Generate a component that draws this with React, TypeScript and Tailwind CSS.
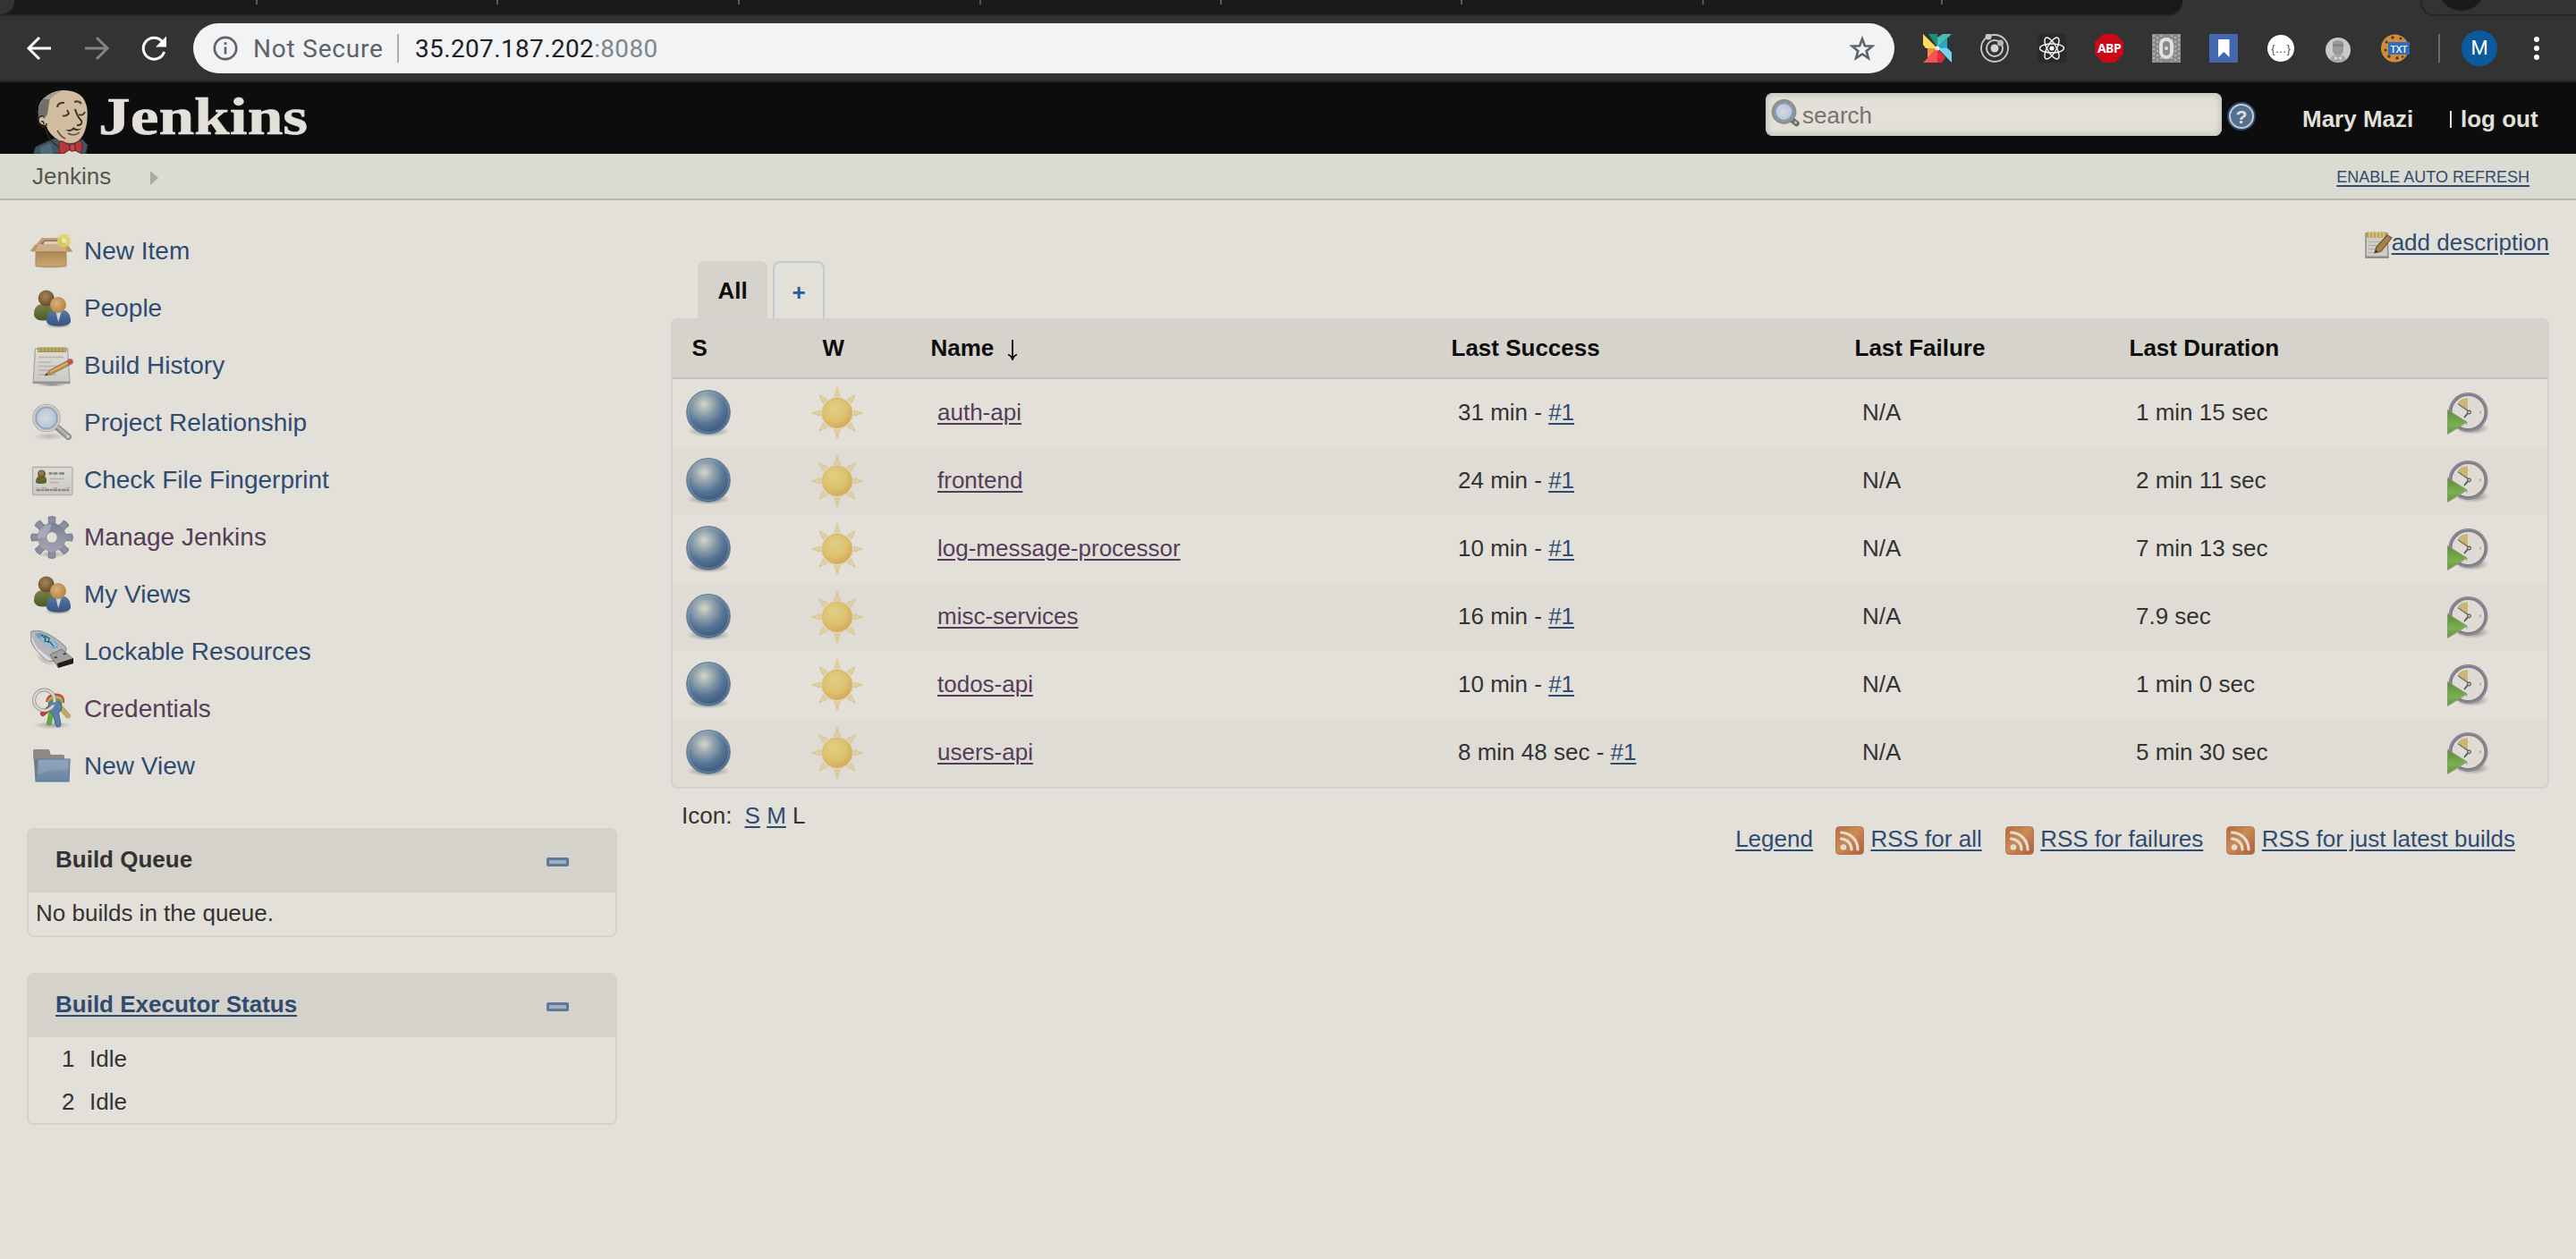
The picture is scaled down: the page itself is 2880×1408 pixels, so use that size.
import React from "react";

const LINK = "underline decoration-2 underline-offset-[3px]";

function Defs() {
  return (
    <svg className="absolute h-0 w-0" aria-hidden="true">
      <defs>
        <radialGradient id="ball" cx="0.4" cy="0.32" r="0.68">
          <stop offset="0" stopColor="#d3d5c4" />
          <stop offset="0.3" stopColor="#98a8b0" />
          <stop offset="0.65" stopColor="#587796" />
          <stop offset="1" stopColor="#39587d" />
        </radialGradient>
        <radialGradient id="sun" cx="0.4" cy="0.35" r="0.7">
          <stop offset="0" stopColor="#e0cf85" />
          <stop offset="0.6" stopColor="#dcc26d" />
          <stop offset="1" stopColor="#d3a45a" />
        </radialGradient>
        <radialGradient id="brown" cx="0.45" cy="0.4" r="0.6">
          <stop offset="0" stopColor="#a98759" />
          <stop offset="1" stopColor="#664a2a" />
        </radialGradient>
        <radialGradient id="orange" cx="0.4" cy="0.4" r="0.6">
          <stop offset="0" stopColor="#d9b27c" />
          <stop offset="1" stopColor="#b98546" />
        </radialGradient>
        <radialGradient id="shadow">
          <stop offset="0" stopColor="#000" stopOpacity="0.45" />
          <stop offset="1" stopColor="#000" stopOpacity="0" />
        </radialGradient>
        <linearGradient id="green" x1="0" y1="0" x2="0" y2="1">
          <stop offset="0" stopColor="#7c8446" />
          <stop offset="1" stopColor="#4b5a22" />
        </linearGradient>
        <linearGradient id="blue" x1="0" y1="0" x2="0" y2="1">
          <stop offset="0" stopColor="#5a7da6" />
          <stop offset="1" stopColor="#34527f" />
        </linearGradient>
        <linearGradient id="box" x1="0" y1="0" x2="0" y2="1">
          <stop offset="0" stopColor="#a8824f" />
          <stop offset="1" stopColor="#cba873" />
        </linearGradient>
        <linearGradient id="gear" gradientUnits="userSpaceOnUse" x1="28" y1="0" x2="20" y2="48">
          <stop offset="0" stopColor="#6a7388" />
          <stop offset="0.5" stopColor="#9496a4" />
          <stop offset="1" stopColor="#aea8b4" />
        </linearGradient>
        <linearGradient id="folder" x1="0" y1="0" x2="0" y2="1">
          <stop offset="0" stopColor="#8aa0b5" />
          <stop offset="1" stopColor="#6784a3" />
        </linearGradient>
        <linearGradient id="paper" x1="0" y1="0" x2="0" y2="1">
          <stop offset="0" stopColor="#dedcd6" />
          <stop offset="1" stopColor="#cbc9c3" />
        </linearGradient>
        <radialGradient id="lens" cx="0.45" cy="0.5" r="0.55">
          <stop offset="0" stopColor="#d3dbe0" />
          <stop offset="1" stopColor="#aebfcf" />
        </radialGradient>
        <linearGradient id="rss" x1="0" y1="0" x2="1" y2="1">
          <stop offset="0" stopColor="#b56a41" />
          <stop offset="0.45" stopColor="#ca8c55" />
          <stop offset="1" stopColor="#ae5c3c" />
        </linearGradient>
        <linearGradient id="play" x1="0" y1="0" x2="0" y2="1">
          <stop offset="0" stopColor="#5a8a38" />
          <stop offset="0.6" stopColor="#7db04e" />
          <stop offset="1" stopColor="#5f9a3a" />
        </linearGradient>
      </defs>
    </svg>
  );
}

type IconProps = { children: React.ReactNode; className?: string };
function Icon48({ children, className = "" }: IconProps) {
  return (
    <svg viewBox="0 0 48 48" className={"h-12 w-12 shrink-0 " + className} fill="none">
      {children}
    </svg>
  );
}

const NewItemIcon = () => (
  <Icon48>
    <ellipse cx="23" cy="40" rx="20" ry="3.500" fill="url(#shadow)" />
    <path d="M13 9h22l5 8H8z" fill="#94744a" />
    <path d="M13 9h22l1.500 2.500H12z" fill="#c0a07a" />
    <path d="M16 13h15l2 4H14z" fill="#d8d1c0" />
    <path d="M13 9 6 17h4l6-6z" fill="#bd9c72" />
    <path d="M6 22h34v17.500q0 1.500-1.500 1.500h-31Q6 41 6 39.500z" fill="url(#box)" stroke="#ad8654" strokeWidth="1" />
    <path d="M6 16h35l6 8q-4 1-7 0H6q-3 1-6-.5z" fill="#cdaf87" />
    <path d="m6 16-6 7.500q3 1.500 5.500 0L8 18zM41 16l6 8q-3 1.500-6 0l-2-6z" fill="#b8966a" />
    <circle cx="37.500" cy="12" r="7.500" fill="#ddd463" opacity="0.85" />
    <circle cx="37.500" cy="12" r="2.600" fill="#eee9b8" />
  </Icon48>
);

const PeopleIcon = () => (
  <Icon48>
    <ellipse cx="31" cy="43" rx="15" ry="3" fill="url(#shadow)" />
    <path d="M4 30q0-11 12-11.500T26 30q0 7-10 7.500T4 32z" fill="url(#green)" />
    <circle cx="17.700" cy="12.500" r="9" fill="url(#brown)" />
    <path d="M18 38q0-13 13.500-13T45 38q0 5.500-13.500 5.500T18 38z" fill="url(#blue)" />
    <path d="m28.500 28 2.700 11 3.300-11z" fill="#cfd3d3" />
    <circle cx="31" cy="20" r="9" fill="url(#orange)" />
  </Icon48>
);

const HistoryIcon = () => (
  <Icon48>
    <ellipse cx="24" cy="45" rx="17" ry="2.500" fill="url(#shadow)" />
    <path d="M5.500 5h36L44 43.500H3z" fill="url(#paper)" stroke="#a9a7a0" strokeWidth="1.300" />
    <path d="M3 41.500h41v2.500H3z" fill="#96948e" />
    <path d="M8 3.500h32V9H8z" fill="#a29350" />
    <path d="M10 3v5M14 3v5M18 3v5M22 3v5M26 3v5M30 3v5M34 3v5M38 3v5" stroke="#c9bd80" strokeWidth="1.200" />
    <path d="M9 14.500h28M9 20h14M9 24.500h25M9 29h18M9 34h20" stroke="#b3b1ab" strokeWidth="1.300" />
    <path d="m16 35 5-5.500L42 18l3 4.500-21.500 11z" fill="#b98e4c" stroke="#8a6a3a" strokeWidth="0.800" />
    <path d="m22 31 20.500-10.500" stroke="#dcb679" strokeWidth="1.500" />
    <path d="m16 35 2-2.600 1.500 1.500z" fill="#333" />
    <circle cx="44.500" cy="19.500" r="3.200" fill="#b95355" />
  </Icon48>
);

const MagnifierIcon = () => (
  <Icon48>
    <ellipse cx="21" cy="39" rx="19" ry="4.500" fill="url(#shadow)" opacity="0.4" />
    <path d="m30 29 12.500 10.500" stroke="#8d8d88" strokeWidth="7" strokeLinecap="round" />
    <path d="m31 29 11 10" stroke="#b2b1ad" strokeWidth="3.600" strokeLinecap="round" />
    <circle cx="42" cy="39.300" r="1.800" fill="#d5d3cc" />
    <circle cx="18" cy="18.500" r="14.300" fill="url(#lens)" stroke="#adaca7" strokeWidth="3" />
    <circle cx="18" cy="18.500" r="14" stroke="#d6d4ce" strokeWidth="1.400" />
    <circle cx="18" cy="18.500" r="11.700" stroke="#8aa0bc" strokeWidth="1.600" />
  </Icon48>
);

const CardIcon = () => (
  <Icon48>
    <rect x="2.500" y="9.500" width="44.500" height="31" rx="1.500" fill="url(#paper)" stroke="#b1afa9" strokeWidth="1.300" />
    <path d="M6 26q0-7 6.500-7T18 26q0 2-6 2t-6-2z" fill="#59682f" />
    <circle cx="12.500" cy="17" r="4.500" fill="url(#brown)" />
    <path d="M20.500 16.500h4M25.500 16.500h5M32 16.500h6" stroke="#85847f" strokeWidth="2.400" />
    <path d="M22 22.500h16M22 26.500h10" stroke="#b3b1ab" strokeWidth="1.300" />
    <path d="M6.500 35h37" stroke="#8a8983" strokeWidth="2.500" strokeDasharray="5 .7 3 .7" />
    <path d="M6.500 32.500h2M13 32.500h5M26 32.500h4M41 32.500h3" stroke="#a3a19b" strokeWidth="1.200" />
  </Icon48>
);

const GearIcon = () => (
  <Icon48>
    <ellipse cx="24" cy="43" rx="16" ry="3.500" fill="url(#shadow)" opacity="0.6" />
    <g fill="#8b8fa0" stroke="#777b8c" strokeWidth="1">
      {[0, 45, 90, 135, 180, 225, 270, 315].map((a) => (
        <path key={a} d="M19 13 20.500 7 20 1.500Q24-.5 28 1.500L27.500 7 29 13z" transform={`rotate(${a} 24 24)`} />
      ))}
    </g>
    <circle cx="24" cy="24" r="16" fill="url(#gear)" />
    <circle cx="24" cy="24" r="6.300" fill="#e2e0d9" stroke="#85889a" strokeWidth="1" />
    <path d="M9 19q5-10 15-10l-3 8q-4 2-4 7l-9 1z" fill="#b1b7c4" opacity="0.7" />
  </Icon48>
);

const UsbIcon = () => (
  <Icon48>
    <path d="M3 22q5 15 25 19l6-3z" fill="url(#shadow)" opacity="0.5" />
    <path d="M0 2Q4-1 12 1q15 5 27 17 3 4-2 8l-9 8q-6 2-11-2Q3 21 0 10z" fill="#b7b4bb" stroke="#85838a" strokeWidth="1" />
    <path d="M2 8q3 12 20 23l2 3q-6 0-9-4Q3 20 1 9z" fill="#dddbdb" />
    <path d="M5 4q7-3 17 4 9 6 9 9 0 3-6 3Q12 14 5 4z" fill="#67a1c0" />
    <path d="M10 8q6 9 15 11 6-1 5-3Q24 8 17 6z" fill="#8fc3d4" />
    <path d="m12 5 5 4-1 3 6 1 4 5M16 6l5 3-1 5" stroke="#2c4c5e" strokeWidth="1.200" />
    <path d="m22 27 13-6 13 11-17 9.500z" fill="#a3a19f" stroke="#777572" strokeWidth="1" />
    <path d="m30 37 18-6v6l-17 5z" fill="#1f1e1d" />
    <path d="m26 30 3-1 1.500 1.500-3 1zM36 26l3-1 1.500 1.500-3 1z" fill="#444" />
  </Icon48>
);

const KeysIcon = () => (
  <Icon48>
    <ellipse cx="24" cy="42" rx="22" ry="4.500" fill="url(#shadow)" opacity="0.6" />
    <path d="m31 19 11 12.500" stroke="#bfa864" strokeWidth="6" strokeLinecap="round" />
    <path d="m25 20-11 9" stroke="#b2403f" strokeWidth="6" strokeLinecap="round" />
    <path d="m24 24-3 15.500" stroke="#6da046" strokeWidth="6" strokeLinecap="round" />
    <path d="M18.500 16q1-8 10-8t8 9" stroke="#b6503f" strokeWidth="3" />
    <path d="M20 17q1-6.500 8.500-6.500T35 17" stroke="#c4ad57" strokeWidth="2.500" />
    <path d="M21 19q1-6 7-6t6 6" stroke="#74994d" strokeWidth="3" />
    <path d="M20 22q0-7 7.500-7T35 22q0 5-3.500 6L34 41q0 3-3 3-2.500 0-3-3l-3-12q-5-2-5-7z" fill="#5b80a8" stroke="#41658f" strokeWidth="1" />
    <circle cx="15.500" cy="14" r="11.500" stroke="#98968f" strokeWidth="4" />
    <circle cx="15.500" cy="14" r="11.500" stroke="#dad8d2" strokeWidth="2.200" />
    <path d="M22 19q5-3 9 1" stroke="#5b80a8" strokeWidth="3" />
  </Icon48>
);

const FolderIcon = () => (
  <Icon48>
    <path d="M3 6.500Q3 5 4.500 5H19q2 0 2.500 2l1 4H36q2 0 2 2v6L36 40H5.500z" fill="#7c7a75" />
    <path d="M3 7q0-2 2-2h14q2 0 2.500 2l1 4H36q2 0 2 2v3H3z" fill="#93918b" opacity="0.7" />
    <path d="M8 16h36L43 41H6z" fill="url(#folder)" stroke="#5e7c9c" strokeWidth="1.200" />
    <path d="M9.500 17.300H42.500L42 28Q25 27 9 33z" fill="#a1b3c4" opacity="0.35" />
  </Icon48>
);

const BallIcon = () => (
  <svg viewBox="0 0 50 56" className="h-[56px] w-[50px]" fill="none">
    <ellipse cx="25" cy="48" rx="24" ry="6.500" fill="url(#shadow)" />
    <circle cx="25" cy="27" r="24.300" fill="url(#ball)" stroke="#6d849c" strokeWidth="1.200" />
    <circle cx="25" cy="27" r="22.500" stroke="#a3b2bf" strokeWidth="1" opacity="0.55" />
  </svg>
);

const SunIcon = () => (
  <svg viewBox="-29 -29 58 58" className="h-[58px] w-[58px]" fill="none">
    {[0, 45, 90, 135, 180, 225, 270, 315].map((a) => (
      <path key={a} d="M-3.200-19 0-28.500 3.200-19z" transform={`rotate(${a})`} fill="#dfd1a2" stroke="#dbbf8a" strokeWidth="0.900" />
    ))}
    <circle r="18" fill="#e1d2ab" />
    <circle r="16.500" fill="url(#sun)" stroke="#d6b572" strokeWidth="0.900" />
  </svg>
);

const BuildIcon = () => (
  <Icon48>
    <ellipse cx="28" cy="41" rx="19" ry="7" fill="url(#shadow)" />
    <circle cx="23.500" cy="23" r="20" fill="#dddbd3" stroke="#817e8b" strokeWidth="4" />
    <circle cx="23.500" cy="23" r="21" stroke="#a3a0aa" strokeWidth="1" opacity="0.6" />
    <path d="m12 12 4-3.500L23 7v14z" fill="#cdb671" />
    <path d="m12 13.500 12 8.500" stroke="#63615c" strokeWidth="1.300" />
    <path d="m24 23-5 6" stroke="#55534f" strokeWidth="1.800" />
    <circle cx="24.500" cy="23" r="1.800" fill="#d8d6ce" stroke="#5a5854" strokeWidth="1.200" />
    <path d="M37 21.500v3M22 34v3" stroke="#b0aea8" strokeWidth="1.800" />
    <path d="M.5 20.500 22 34 .5 47.500z" fill="url(#play)" stroke="#8a9a7c" strokeWidth="1" />
  </Icon48>
);

const RssIcon = () => (
  <svg viewBox="0 0 32 32" className="h-8 w-8 shrink-0" fill="none">
    <rect x="0.500" y="0.500" width="31" height="31" rx="4" fill="url(#rss)" stroke="#b9774f" />
    <circle cx="9" cy="23.500" r="3.300" fill="#e6ddcf" />
    <path d="M6.500 14A12 12 0 0 1 18 26M6.500 7A19 19 0 0 1 25 26" stroke="#e6ddcf" strokeWidth="3.200" strokeLinecap="round" />
  </svg>
);

const NotepadIcon = () => (
  <svg viewBox="0 0 32 32" className="h-8 w-8 shrink-0" fill="none">
    <path d="M2 3h24l1 27H2z" fill="#cfcdc7" stroke="#8e8c86" strokeWidth="1.500" />
    <path d="M2 29.500h25" stroke="#8b8984" strokeWidth="2" />
    <path d="M3 1.500h22V8H3z" fill="#b8a45b" />
    <path d="M6 1v7M10 1v7M14 1v7M18 1v7M22 1v7" stroke="#ddd0a0" strokeWidth="1.200" />
    <path d="M5 12.500h15M5 16.500h9M5 20.500h8M5 24.500h7" stroke="#b0aea8" strokeWidth="1.200" />
    <path d="m12 25 2-7L26 5l5 3-12 15z" fill="#a8824d" stroke="#6e522d" strokeWidth="1.200" />
    <path d="m12 25 1-3.500 2.500 1.700z" fill="#333" />
  </svg>
);

/* Browser chrome */

const TAB_WIDTHS = ["w-[288px]", "w-[269px]", "w-[270px]", "w-[270px]", "w-[269px]", "w-[269px]", "w-[270px]", "w-[267px]"];

function TabStrip() {
  return (
    <div className="flex h-[18px] bg-[#333333]">
      <div className="relative flex h-[18px] w-[2440px] rounded-br-[16px] border-b-2 border-[#262626] bg-[#1a1a1a]">
        <div className="absolute left-0 top-0 h-4 w-4 rounded-br-[14px] bg-[#333333]" />
        {TAB_WIDTHS.map((w, i) => (
          <div key={i} className={w + " h-[5px] border-r-2 border-[#5a5a5a]"} />
        ))}
      </div>
      <div className="w-[266px]" />
      <div className="flex flex-1 overflow-hidden rounded-bl-[16px] border-b-2 border-l-2 border-[#262626] bg-[#333333] pl-[18px]">
        <div className="-mt-10 h-[52px] w-[52px] rounded-full bg-[#1a1a1a]" />
      </div>
    </div>
  );
}

const PinwheelIcon = () => (
  <svg viewBox="0 0 32 32" className="h-8 w-8">
    <path d="M6 0h10v15z" fill="#1b8f7f" />
    <path d="M16 15V4l6-4h10z" fill="#48beb0" />
    <path d="M16 15 27 5v11z" fill="#27a9cf" />
    <path d="M16 15.500h11l5 5V32z" fill="#70d6ee" />
    <path d="M16 16l9 10-4 6h-5z" fill="#dc2f38" />
    <path d="M16 16v16H0l5-5z" fill="#f45355" />
    <path d="M16 16 5 27V16z" fill="#f58c3c" />
    <path d="M16 16H3L0 12V0z" fill="#f9dc5c" />
    <circle cx="16" cy="16" r="2.500" fill="#e8f4f8" />
  </svg>
);

const OrbitIcon = () => (
  <svg viewBox="0 0 32 32" className="h-8 w-8" fill="none" stroke="#c9c9c9">
    <circle cx="16" cy="16" r="15" strokeWidth="1.800" />
    <circle cx="16" cy="16" r="9" strokeWidth="2" />
    <circle cx="16" cy="16" r="4.500" fill="#d4d4d4" stroke="none" />
    <circle cx="9" cy="3" r="3.500" fill="#c9c9c9" stroke="none" />
    <circle cx="22.500" cy="10" r="3.500" fill="#b5b5b5" stroke="none" />
  </svg>
);

const AtomIcon = () => (
  <svg viewBox="0 0 32 32" className="h-8 w-8 rounded-sm bg-[#2a2a2a]" fill="none" stroke="#fff" strokeWidth="1.400">
    <ellipse cx="16" cy="16" rx="13.500" ry="5" />
    <ellipse cx="16" cy="16" rx="13.500" ry="5" transform="rotate(60 16 16)" />
    <ellipse cx="16" cy="16" rx="13.500" ry="5" transform="rotate(120 16 16)" />
    <circle cx="16" cy="16" r="2.600" fill="#fff" stroke="none" />
  </svg>
);

const AbpIcon = () => (
  <span className="flex h-8 w-8 items-center justify-center bg-[#cc0814] font-['Noto_Sans'] text-[14px] font-bold leading-none tracking-[-0.5px] text-white [clip-path:polygon(30%_0,70%_0,100%_30%,100%_70%,70%_100%,30%_100%,0_70%,0_30%)]">
    ABP
  </span>
);

const ZeroIcon = () => (
  <span className="relative flex h-8 w-8 items-center justify-center overflow-hidden bg-[#8a8a8a]">
    <svg viewBox="0 0 32 32" className="absolute inset-0" stroke="#b5b5b5" strokeWidth="2" strokeDasharray="2 3">
      <path d="M2 1v31M6 3v29M10 1v31M22 1v31M26 3v29M30 1v31" />
    </svg>
    <svg viewBox="0 0 32 32" className="relative h-8 w-8" fill="#8a8a8a">
      <rect x="10" y="6" width="12" height="20" rx="6" stroke="#e0e0e0" strokeWidth="4" />
      <circle cx="16" cy="16" r="2" fill="#e0e0e0" />
    </svg>
  </span>
);

const BookmarkIcon = () => (
  <svg viewBox="0 0 32 32" className="h-8 w-8">
    <rect width="32" height="32" rx="1" fill="#4468b0" />
    <path d="M10 6h12.500v20l-6.200-6-6.300 6z" fill="#fff" />
  </svg>
);

const BracesIcon = () => (
  <span className="flex h-[30px] w-[30px] items-center justify-center rounded-full bg-white font-['Liberation_Sans'] text-[13px] leading-none text-[#555]">
    {"{…}"}
  </span>
);

const BeardIcon = () => (
  <svg viewBox="0 0 32 32" className="h-8 w-8">
    <circle cx="16" cy="18" r="14" fill="#c9c9c9" />
    <path d="M10 9q6-4 12 0v9q0 5-6 6-6-1-6-6z" fill="#9a9a9a" />
    <path d="M10 11h12v3H10z" fill="#858585" />
    <path d="M7 28q2-5 9-5t9 5q-4 4-9 4t-9-4z" fill="#a6a6a6" />
    <path d="m12 25 4 2 4-2v4l-4-2-4 2z" fill="#dedede" />
  </svg>
);

const CookieIcon = () => (
  <span className="relative flex h-8 w-8 items-center">
    <svg viewBox="0 0 32 32" className="absolute inset-0">
      <circle cx="15.500" cy="16" r="15.500" fill="#d08e3c" />
      <g fill="#5c3313">
        <circle cx="6" cy="9" r="1.500" />
        <circle cx="13" cy="4" r="1.800" />
        <circle cx="22" cy="5" r="1.500" />
        <circle cx="5" cy="18" r="1.500" />
        <circle cx="9" cy="25" r="1.800" />
        <circle cx="18" cy="27" r="1.800" />
        <circle cx="24" cy="25.500" r="1.300" />
      </g>
    </svg>
    <span className="relative ml-2 flex h-[14px] w-6 items-center justify-center bg-[#2f6fb9] font-['Noto_Sans'] text-[11px] font-medium leading-none text-white">TXT</span>
  </span>
);

const EXTENSIONS = [PinwheelIcon, OrbitIcon, AtomIcon, AbpIcon, ZeroIcon, BookmarkIcon, BracesIcon, BeardIcon, CookieIcon];

function Toolbar() {
  return (
    <div className="flex h-[74px] items-center border-b-2 border-[#262626] bg-[#333333] pl-[28px]">
      <svg viewBox="0 0 32 32" className="h-8 w-8" fill="none" stroke="#fff" strokeWidth="3">
        <path d="M29 16H4.500M16 4 4 16l12 12" />
      </svg>
      <svg viewBox="0 0 32 32" className="ml-8 h-8 w-8" fill="none" stroke="#848484" strokeWidth="3">
        <path d="M3 16h24.500M16 4l12 12-12 12" />
      </svg>
      <svg viewBox="0 0 32 32" className="ml-8 h-8 w-8" fill="none" stroke="#fff" strokeWidth="3">
        <path d="M25.500 8.500A12 12 0 1 0 27.600 20" />
        <path d="M30 2.500v12H18z" fill="#fff" stroke="none" />
      </svg>
      <div className="ml-7 flex h-14 w-[1902px] items-center rounded-full bg-[#f1f3f5] pl-[22px] pr-5 font-['Roboto'] text-[28px] leading-none">
        <svg viewBox="0 0 28 28" className="h-7 w-7" fill="none" stroke="#5f6368" strokeWidth="2.700">
          <circle cx="14" cy="14" r="12.200" />
          <path d="M14 12.500v8M14 7.300v2.800" />
        </svg>
        <span className="ml-[17px] mt-[2px] w-[148px] whitespace-nowrap tracking-[0.8px] text-[#5f6368]">Not Secure</span>
        <span className="ml-[13px] h-8 w-[2px] bg-[#a9acb0]" />
        <span className="ml-[18px] mt-[2px] whitespace-nowrap tracking-[0.350px] text-[#202124]">
          35.207.187.202<span className="text-[#80868b]">:8080</span>
        </span>
        <svg viewBox="0 0 32 32" className="ml-auto h-8 w-8" fill="none" stroke="#5f6368" strokeWidth="2.600">
          <path d="m16 5.500 2.900 7.800 8.300.4-6.500 5.200 2.200 8.100L16 22.500 9.100 27l2.200-8.100-6.500-5.200 8.300-.4z" />
        </svg>
      </div>
      <div className="ml-8 flex items-center gap-8">
        {EXTENSIONS.map((Ext, i) => (
          <span key={i} className="flex h-8 w-8 items-center justify-center">
            <Ext />
          </span>
        ))}
      </div>
      <span className="ml-8 h-8 w-[2px] bg-[#6a6a6a]" />
      <span className="ml-6 flex h-10 w-10 items-center justify-center rounded-full bg-[#0b5a9d] font-['Roboto'] text-[22px] leading-none text-white">M</span>
      <span className="ml-[41px] flex flex-col gap-1 [&>i]:h-[6px] [&>i]:w-[6px] [&>i]:rounded-full [&>i]:bg-white">
        <i />
        <i />
        <i />
      </span>
    </div>
  );
}

/* Page header */

const ButlerLogo = () => (
  <svg viewBox="0 0 66 72" className="h-[72px] w-[66px]" fill="none">
    <path d="M1 72 4 64l20-9 16 3 16-2 6 6-2 10z" fill="#405663" stroke="#22303a" strokeWidth="1" />
    <path d="M8 66l12-6 4 12H10z" fill="#4f6a78" />
    <path d="M8 34Q3 14 18 6 30-1 44 2q15 3 17.500 20 1 14-2.500 24-5 14-16 14-13 0-22-10-5-6-5-10-7 0-9-5-1-5 1-8z" fill="#d2bda0" />
    <path d="M7 30Q5 15 17 7L32 2Q20 7 19 14q-1 7-2 14l-4 5-2-4z" fill="#726d68" />
    <path d="M13 11q6-8 20-9-9 4-13 9z" fill="#a39d95" />
    <path d="M13 30q-5-1-6 3 0 6 5 9 4 0 4-4M15 44q2 12 14 20M10 36q3-1 3 3" stroke="#2c2722" strokeWidth="1.500" />
    <path d="M28 20q1-6 8-5M47 14q5-2 8 2" stroke="#4a4138" strokeWidth="2.200" />
    <path d="M34 29q3 2 7-2l-2-4M52 28q5 2 7-3" stroke="#3b342d" strokeWidth="1.800" />
    <path d="M48 22q2 8 7 13 2 5-5 5" stroke="#3b2f26" strokeWidth="1.900" />
    <path d="M37 45q7 1 9-3 4 4 10 1-5 5-10 2-4 4-9 0z" fill="#3a322b" />
    <path d="M40 49q7 4 13-1M28 46q5 8 9 9" stroke="#5b4c3e" strokeWidth="1.500" />
    <path d="M38 64q5-5 12 0l4 8H36z" fill="#dcdad4" />
    <path d="M30 60q0-3 4-2l9 5 9-5q4-1 4 3l-1 9q-1 2-4 0l-7-4-9 6q-5 1-5-4z" fill="#b03a3c" stroke="#6d1f22" strokeWidth="1" />
    <rect x="42" y="61" width="6" height="8" rx="2" fill="#c24a4a" stroke="#5d1719" strokeWidth="1" />
  </svg>
);

const SearchIcon = () => (
  <svg viewBox="0 0 32 32" className="h-8 w-8 shrink-0" fill="none">
    <path d="m22 22 6.500 5" stroke="#6b6a66" strokeWidth="6.500" strokeLinecap="round" />
    <circle cx="27.500" cy="26" r="1.700" fill="#bbb" />
    <circle cx="14.500" cy="14" r="12.300" fill="url(#lens)" stroke="#8f8e89" strokeWidth="3.200" />
    <circle cx="14.500" cy="14" r="9.800" stroke="#7f98b8" strokeWidth="1.800" />
  </svg>
);

function PageHeader() {
  return (
    <header className="flex h-20 items-start bg-[#0d0d0d] pl-9 text-[#e2e0d9]">
      <div className="mt-2">
        <ButlerLogo />
      </div>
      <div className="ml-[8px] mt-[2px] w-[232px] origin-left scale-x-[1.19] whitespace-nowrap font-['Liberation_Serif'] text-[60px] font-bold leading-[72px] [-webkit-text-stroke:0.6px_#e2e0d9]">
        Jenkins
      </div>
      <div className="ml-auto mt-3 flex h-12 w-[510px] items-center rounded-lg bg-[#e2e0d9] pl-[6px] shadow-[inset_0_0_6px_2px_#c3bfb8]">
        <span className="-mt-[2px]">
          <SearchIcon />
        </span>
        <span className="ml-[3px] mt-[2px] text-[26px] leading-none text-[#75736e]">search</span>
      </div>
      <span className="ml-[6px] mt-[22px] flex h-8 w-8 items-center justify-center rounded-full border-2 border-[#2f4a70] bg-[#c5cbd0] p-[2px]">
        <span className="flex h-full w-full items-center justify-center rounded-full bg-[#54708f] text-[21px] font-bold leading-none text-[#e2e0d9]">?</span>
      </span>
      <div className="mt-[24px] flex items-center text-[26px] font-bold leading-[34px]">
        <span className="ml-[52px] w-[165px]">Mary Mazi</span>
        <span className="h-[19px] w-[2px] bg-[#e2e0d9]" />
        <span className="ml-[10px] w-[129px]">log out</span>
      </div>
    </header>
  );
}

function Breadcrumbs() {
  return (
    <div className="flex h-[52px] items-center border-b-2 border-[#bbbab1] bg-[#dbdbd2] pl-[36px] pr-[52px]">
      <span className="text-[26px] leading-[50px] text-[#56564f]">Jenkins</span>
      <svg viewBox="0 0 9 16" className="ml-[44px] mt-[3px] h-4 w-[9px]">
        <path d="M0 0v16l9-8z" fill="#aaa9a3" />
      </svg>
      <a className={"ml-auto mt-px text-[18px] leading-[50px] text-[#2f4b70] " + LINK}>ENABLE AUTO REFRESH</a>
    </div>
  );
}

/* Side panel */

const TASKS: { label: string; Icon: () => React.JSX.Element; visited?: boolean }[] = [
  { label: "New Item", Icon: NewItemIcon },
  { label: "People", Icon: PeopleIcon },
  { label: "Build History", Icon: HistoryIcon },
  { label: "Project Relationship", Icon: MagnifierIcon },
  { label: "Check File Fingerprint", Icon: CardIcon },
  { label: "Manage Jenkins", Icon: GearIcon, visited: true },
  { label: "My Views", Icon: PeopleIcon },
  { label: "Lockable Resources", Icon: UsbIcon },
  { label: "Credentials", Icon: KeysIcon, visited: true },
  { label: "New View", Icon: FolderIcon },
];

const CollapseIcon = () => <span className="h-[10px] w-[25px] rounded-[2px] border-[3px] border-[#5f7898] bg-[#9fb0c0]" />;

function Pane({ title, children, className = "" }: { title: React.ReactNode; children: React.ReactNode; className?: string }) {
  return (
    <section className={"w-[660px] overflow-hidden rounded-lg border-2 border-[#d4d2cb] " + className}>
      <div className="flex h-[70px] items-start justify-between bg-[#d5d2cb] pl-[30px] pr-[52px]">
        <span className="mt-[15px] text-[26px] font-bold leading-[36px]">{title}</span>
        <span className="mt-[31px] flex">
          <CollapseIcon />
        </span>
      </div>
      {children}
    </section>
  );
}

function SidePanel() {
  return (
    <aside className="w-[690px] shrink-0 pl-[30px] pt-[25px] text-[#333]">
      <nav className="pl-1">
        {TASKS.map(({ label, Icon, visited }) => (
          <a key={label} className={"flex h-16 items-center gap-3 text-[28px] leading-none " + (visited ? "text-[#553d59]" : "text-[#2f4b70]")}>
            <Icon />
            {label}
          </a>
        ))}
      </nav>
      <Pane title="Build Queue" className="mt-[37px] h-[122px]">
        <p className="pl-2 text-[26px] leading-[46px]">No builds in the queue.</p>
      </Pane>
      <Pane title={<a className={"text-[#2f4b70] " + LINK}>Build Executor Status</a>} className="mt-10 h-[170px]">
        {[1, 2].map((n) => (
          <div key={n} className="flex pl-[37px] text-[26px] leading-[48px]">
            <span className="w-[31px]">{n}</span>
            <span>Idle</span>
          </div>
        ))}
      </Pane>
    </aside>
  );
}

/* Job list */

const COLS = "grid grid-cols-[146px_121px_582px_451px_307px_341px_148px]";

const JOBS = [
  { name: "auth-api", success: "31 min", duration: "1 min 15 sec" },
  { name: "frontend", success: "24 min", duration: "2 min 11 sec" },
  { name: "log-message-processor", success: "10 min", duration: "7 min 13 sec" },
  { name: "misc-services", success: "16 min", duration: "7.9 sec" },
  { name: "todos-api", success: "10 min", duration: "1 min 0 sec" },
  { name: "users-api", success: "8 min 48 sec", duration: "5 min 30 sec" },
];

const SortArrow = () => (
  <svg viewBox="0 0 12 24" className="ml-[15px] inline-block h-6 w-3 align-[-6px]" fill="none" stroke="#0d0d0d">
    <path d="M6 0v22" strokeWidth="1.800" />
    <path d="M1 16.500q4 1.500 5 6 1-4.500 5-6" strokeWidth="1.800" />
  </svg>
);

function JobTable() {
  return (
    <div className="overflow-hidden rounded-lg border-2 border-[#d4d2cc] text-[26px] text-[#333]">
      <div className={COLS + " h-[66px] border-b-2 border-[#c4c2bc] bg-[#d6d3cd] font-bold leading-[62px] text-[#0d0d0d] [&>span]:pl-[21.5px]"}>
        <span>S</span>
        <span>W</span>
        <span>
          Name
          <SortArrow />
        </span>
        <span>Last Success</span>
        <span>Last Failure</span>
        <span>Last Duration</span>
        <span />
      </div>
      {JOBS.map((job) => (
        <div key={job.name} className={COLS + " h-[76px] items-center leading-[74px] even:bg-[#e2e0d9] odd:bg-[#dfdcd5]"}>
          <div className="pl-[15px]">
            <BallIcon />
          </div>
          <div className="pl-[9px]">
            <SunIcon />
          </div>
          <div className="h-[76px] pl-[29px]">
            <a className={"text-[#553d59] " + LINK}>{job.name}</a>
          </div>
          <div className="h-[76px] pl-[29px]">
            {job.success} - <a className={"text-[#2f4b70] " + LINK}>#1</a>
          </div>
          <div className="h-[76px] pl-[30px]">N/A</div>
          <div className="h-[76px] pl-[29px]">{job.duration}</div>
          <div className="pl-[36px]">
            <BuildIcon />
          </div>
        </div>
      ))}
    </div>
  );
}

function MainPanel() {
  const blue = "text-[#2f4b70] " + LINK;
  return (
    <main className="ml-[60px] w-[2100px] text-[26px] text-[#333]">
      <div className="flex h-[68px] items-end justify-end">
        <span className="mb-[2px] flex">
          <NotepadIcon />
        </span>
        <a className={"mb-[6px] -ml-px leading-[30px] " + blue}>add description</a>
      </div>
      <div className="flex h-16 gap-[6px] pl-[30px] font-bold leading-[66px]">
        <div className="w-[78px] rounded-t-lg bg-[#d5d2cb] text-center text-[#0d0d0d]">All</div>
        <div className="w-[58px] rounded-t-lg border-2 border-b-0 border-[#c1cbcf] text-center text-[#2c5b9c]">+</div>
      </div>
      <JobTable />
      <div className="flex">
        <div className="pl-[12px] pt-[12px] leading-[36px]">
          Icon: <a className={"ml-[7px] " + blue}>S</a> <a className={blue}>M</a> L
        </div>
        <div className="ml-auto flex h-8 items-center pr-[38px] pt-[58px]">
          <a className={"mr-[25px] leading-[26px] -mt-[5px] " + blue}>Legend</a>
          {["RSS for all", "RSS for failures", "RSS for just latest builds"].map((t) => (
            <span key={t} className="mr-[26px] flex items-center last:mr-0">
              <RssIcon />
              <a className={"ml-[7.5px] -mt-[5px] leading-[26px] " + blue}>{t}</a>
            </span>
          ))}
        </div>
      </div>
    </main>
  );
}

export default function App() {
  return (
    <div className="h-[1408px] w-[2880px] overflow-hidden bg-[#e2e0d9] font-['Liberation_Sans',sans-serif]">
      <Defs />
      <TabStrip />
      <Toolbar />
      <PageHeader />
      <Breadcrumbs />
      <div className="flex">
        <SidePanel />
        <MainPanel />
      </div>
    </div>
  );
}
